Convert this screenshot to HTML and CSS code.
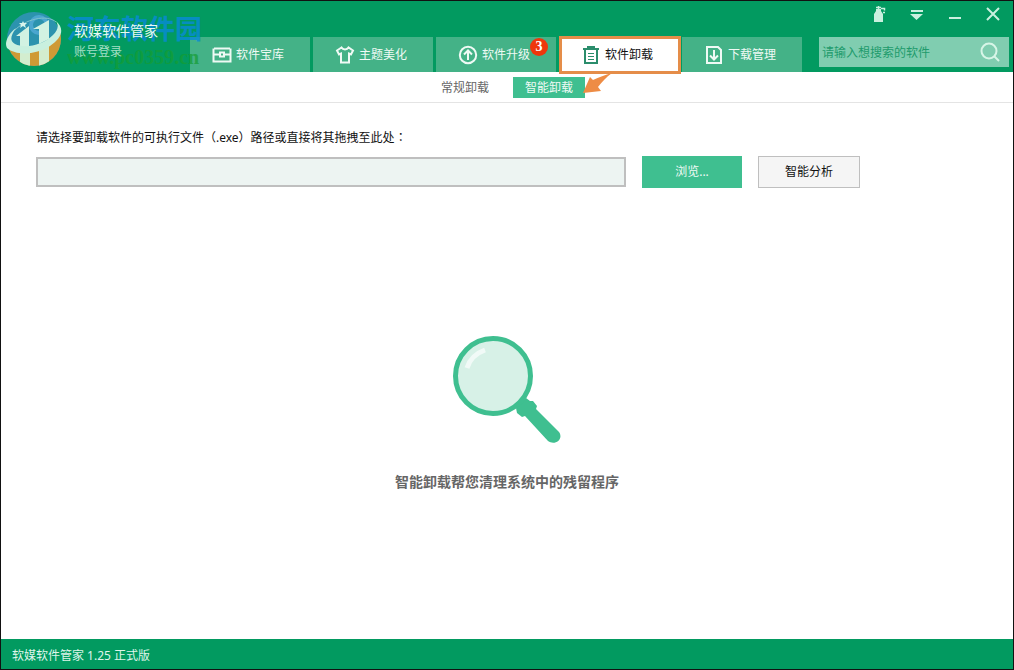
FILE: index.html
```html
<!DOCTYPE html>
<html lang="zh-CN">
<head>
<meta charset="utf-8">
<title>软媒软件管家</title>
<link rel="stylesheet" href="styles.css">
</head>
<body>
<div class="window">
  <header class="header">
    <div class="brand">
      <svg class="logo" viewBox="0 0 58 58" aria-hidden="true">
        <defs><clipPath id="disc"><circle cx="29" cy="28" r="27"/></clipPath></defs>
        <g clip-path="url(#disc)">
          <rect width="58" height="58" fill="#2c93ae"/>
          <circle cx="34" cy="14" r="8" fill="none" stroke="#4ba6cf" stroke-width="4"/>
          <path d="M0 38C20 43 42 36 58 20V58H0z" fill="#cf9a35"/>
          <path d="M15 41l10-1v18H15zM34 38l10-5v25H34z" fill="#d3edcf"/>
        </g>
        <path d="M15 36V25h-4l13-10v21zM34 33V18h-6L44 9v19z" fill="#d2f2e2"/>
        <path d="M51 10C60 18 57 27 45 35 31 44 11 45 2 37-1 32 3 23 11 17 6 24 4 30 10 33 20 38 38 34 48 24 53 19 54 15 51 10z" fill="#c9f0df"/>
        <path d="M9 20C20 8 42 3 51 11" fill="none" stroke="#7cc3cb" stroke-width="1"/>
        <path d="M18 10l1 2 3 0-2 2 1 3-3-2-3 2 1-3-2-2h3z" fill="#d6f4ec"/>
      </svg>
      <div class="account">
        <strong class="name">软媒软件管家</strong>
        <a class="login" href="#">账号登录</a>
      </div>
      <div class="stamp" aria-hidden="true"><span class="stamp-name">河东软件园</span><span class="stamp-url">www.pc0359.cn</span></div>
    </div>
    <nav class="tabs">
      <a class="tab" href="#"><svg class="icon" viewBox="0 0 20 20"><path d="M2 3.500h16M1.500 3.500v13h17v-13M1.500 9.500H8M12 9.500h6.500M8 7.500h4v4H8z"/></svg>软件宝库</a>
      <a class="tab" href="#"><svg class="icon" viewBox="0 0 20 20"><path d="M6.500 2.500L2 5.500l2 4 2-1v9h8v-9l2 1 2-4-4.500-3C12 5 8 5 6.500 2.500z"/></svg>主题美化</a>
      <a class="tab" href="#"><svg class="icon" viewBox="0 0 20 20"><circle cx="10" cy="10" r="8.200"/><path d="M10 15V6M6 9.500l4-4 4 4"/></svg>软件升级<span class="badge">3</span></a>
      <a class="tab active" href="#" aria-current="page"><svg class="icon" viewBox="0 0 20 20"><path d="M2 4h16M7 4V2h6v2M4 5v13h12V5" /><path class="thin" d="M7 8.500h6M7 11.500h6M7 14.500h6"/></svg>软件卸载</a>
      <a class="tab" href="#"><svg class="icon" viewBox="0 0 20 20"><path d="M3 2h11l3 3v13H3zM10 5v9M6 10.500l4 4 4-4"/></svg>下载管理</a>
    </nav>
    <div class="tools">
      <div class="controls">
        <button class="control" aria-label="皮肤"><svg viewBox="0 0 20 20"><path d="M7 5h5v2l2 3v8H5v-8l2-3z" fill="#c9f0df"/><path d="M7 3.500h5M9.500 2v3M12 4.500h3.500v2M14 8.500h2" stroke="#c9f0df" stroke-width="1.500" fill="none"/></svg></button>
        <button class="control" aria-label="菜单"><svg viewBox="0 0 20 20"><path d="M4 6h12v2H4zM3 10h13l-6.500 6z" fill="#c9f0df"/></svg></button>
        <button class="control" aria-label="最小化"><svg viewBox="0 0 20 20"><path d="M4 13h12v2H4z" fill="#c9f0df"/></svg></button>
        <button class="control" aria-label="关闭"><svg viewBox="0 0 20 20"><path d="M4 4l12 12M16 4L4 16" stroke="#c9f0df" stroke-width="2"/></svg></button>
      </div>
      <form class="search">
        <input class="search-input" type="text" aria-label="搜索软件" placeholder="请输入想搜索的软件">
        <button class="search-button" type="button" aria-label="搜索"><svg viewBox="0 0 20 20"><circle cx="9" cy="9" r="7.500"/><path d="M14.500 14.500L19 19"/></svg></button>
      </form>
    </div>
  </header>
  <nav class="subnav">
    <a class="subtab" href="#">常规卸载</a>
    <a class="subtab selected" href="#" aria-current="page">智能卸载<svg class="arrow" viewBox="0 0 30 24" aria-hidden="true"><path d="M0 21L7 5l3 3C16 5 22 3 29 1 23 5 19 10 15 15l3 4z" fill="#ee8c45"/></svg></a>
  </nav>
  <main class="content">
    <label class="prompt" for="path">请选择要卸载软件的可执行文件（.exe）路径或直接将其拖拽至此处<span class="colon" lang="zh-TW">：</span></label>
    <div class="row">
      <input class="path" id="path" type="text">
      <button class="button primary">浏览...</button>
      <button class="button plain">智能分析</button>
    </div>
    <section class="empty">
      <svg class="lens" viewBox="0 0 108 108" aria-hidden="true">
        <path d="M63 72L73 62l4 3 3 0 4 5-1 3 23 23c5 7-4 14-11 9L72 80l-3 1-5-4z" fill="#3fbf90"/>
        <circle cx="40" cy="40" r="37.500" fill="#d7f1e7" stroke="#3fbf90" stroke-width="5"/>
        <path d="M14 32Q18 19 32 14" fill="none" stroke="#f1faf7" stroke-width="5"/>
      </svg>
      <p class="tip">智能卸载帮您清理系统中的残留程序</p>
    </section>
  </main>
  <footer class="footer">软媒软件管家 1.25 正式版</footer>
</div>
</body>
</html>
```
FILE: styles.css
```css
* { box-sizing: border-box; }
body {
  margin: 0;
  font: 12px/16px "Noto Sans", "Noto Sans CJK SC", sans-serif;
  color: #111;
}
a { color: inherit; text-decoration: none; }
button, input { font: inherit; border-radius: 0; }
button { padding: 0; border: 0; }
.window {
  display: flex;
  flex-direction: column;
  min-height: 100vh;
  border: 1px solid #111;
  background: #fff;
}
.header {
  display: flex;
  align-items: flex-end;
  height: 71px;
  background: #029a60;
}
.brand {
  position: relative;
  z-index: 2;
  display: flex;
  width: 189px;
  height: 100%;
  padding: 10px 0 0 4px;
  gap: 11px;
}
.logo { width: 58px; height: 58px; }
.account {
  z-index: 2;
  display: flex;
  flex-direction: column;
  gap: 5px;
  padding-top: 12px;
}
.name { font-size: 14px; font-weight: 400; color: #eafaf3; }
.login { color: #a5dfc4; }
.stamp {
  position: absolute;
  z-index: 1;
  left: 66px;
  top: 12px;
  display: flex;
  flex-direction: column;
  font-weight: 700;
  white-space: nowrap;
  pointer-events: none;
}
.stamp-name { font-size: 27px; line-height: 32px; color: #078bd8; opacity: 0.8; }
.stamp-url { font: 700 20px/24px "Liberation Serif", serif; color: #159d32; opacity: 0.7; }
.tabs { display: flex; flex: 1; gap: 3px; }
.tab {
  position: relative;
  display: flex;
  align-items: center;
  gap: 4px;
  width: 120px;
  height: 35px;
  padding-left: 22px;
  background: #44b287;
  color: #effaf5;
}
.tab.active {
  z-index: 1;
  width: 122px;
  height: 38px;
  margin: -1px -2px -2px 0;
  padding-left: 19px;
  border: 3px solid #e58d49;
  background: #fff;
  color: #111;
}
.icon { width: 20px; height: 20px; fill: none; stroke: #effaf5; stroke-width: 2; }
.active .icon { stroke: #2b8d6c; }
.thin { stroke-width: 1; }
.badge {
  position: absolute;
  top: 1px;
  right: 8px;
  width: 18px;
  height: 18px;
  border-radius: 50%;
  background: #ee370c;
  color: #fff;
  font: 700 14px/18px "Liberation Serif", serif;
  text-align: center;
}
.tools {
  display: flex;
  flex-direction: column;
  justify-content: space-between;
  width: 190px;
  height: 100%;
  margin-right: 4px;
  padding: 3px 0 5px;
}
.controls { display: flex; justify-content: flex-end; gap: 18px; padding-right: 6px; }
.control { width: 20px; height: 20px; background: none; }
.control svg { display: block; width: 20px; height: 20px; }
.search { display: flex; align-items: center; height: 30px; background: #80cdb0; }
.search-input {
  flex: 1;
  min-width: 0;
  padding: 2px 3px 0;
  border: 0;
  background: none;
  color: #17865a;
}
.search-input::placeholder { color: #209b6c; opacity: 1; }
.search-button { width: 20px; height: 20px; margin-right: 9px; background: none; }
.search-button svg { display: block; fill: none; stroke: #d7f5e7; stroke-width: 2; }
.subnav {
  display: flex;
  justify-content: center;
  align-items: center;
  gap: 12px;
  height: 31px;
  border-bottom: 1px solid #e4e4e4;
}
.subtab { position: relative; width: 72px; line-height: 21px; text-align: center; color: #666; }
.subtab.selected { background: #3fbf90; color: #effaf5; }
.arrow { position: absolute; left: 70px; top: -5px; z-index: 2; width: 30px; height: 24px; }
.content { flex: 1; padding: 27px 35px 0; }
.prompt { display: block; }
.colon { font-family: "Noto Sans CJK TC", sans-serif; line-height: 1; }
.row { display: flex; align-items: center; margin-top: 10px; }
.path {
  width: 590px;
  height: 30px;
  padding: 0 6px;
  border: 2px solid #bfbfbf;
  background: #edf4f2;
}
.button { height: 32px; margin-left: 16px; }
.primary { width: 100px; background: #3fbf90; color: #effaf5; }
.plain { width: 102px; border: 1px solid #bfbfbf; background: #f5f5f5; color: #111; }
.empty { display: flex; flex-direction: column; align-items: center; padding-top: 148px; }
.lens { width: 108px; height: 108px; }
.tip { margin: 28px 0 0; font-size: 14px; line-height: 20px; font-weight: 700; color: #666; }
.footer { height: 30px; padding-left: 11px; line-height: 34px; background: #029a60; color: #dff5ea; }
```
